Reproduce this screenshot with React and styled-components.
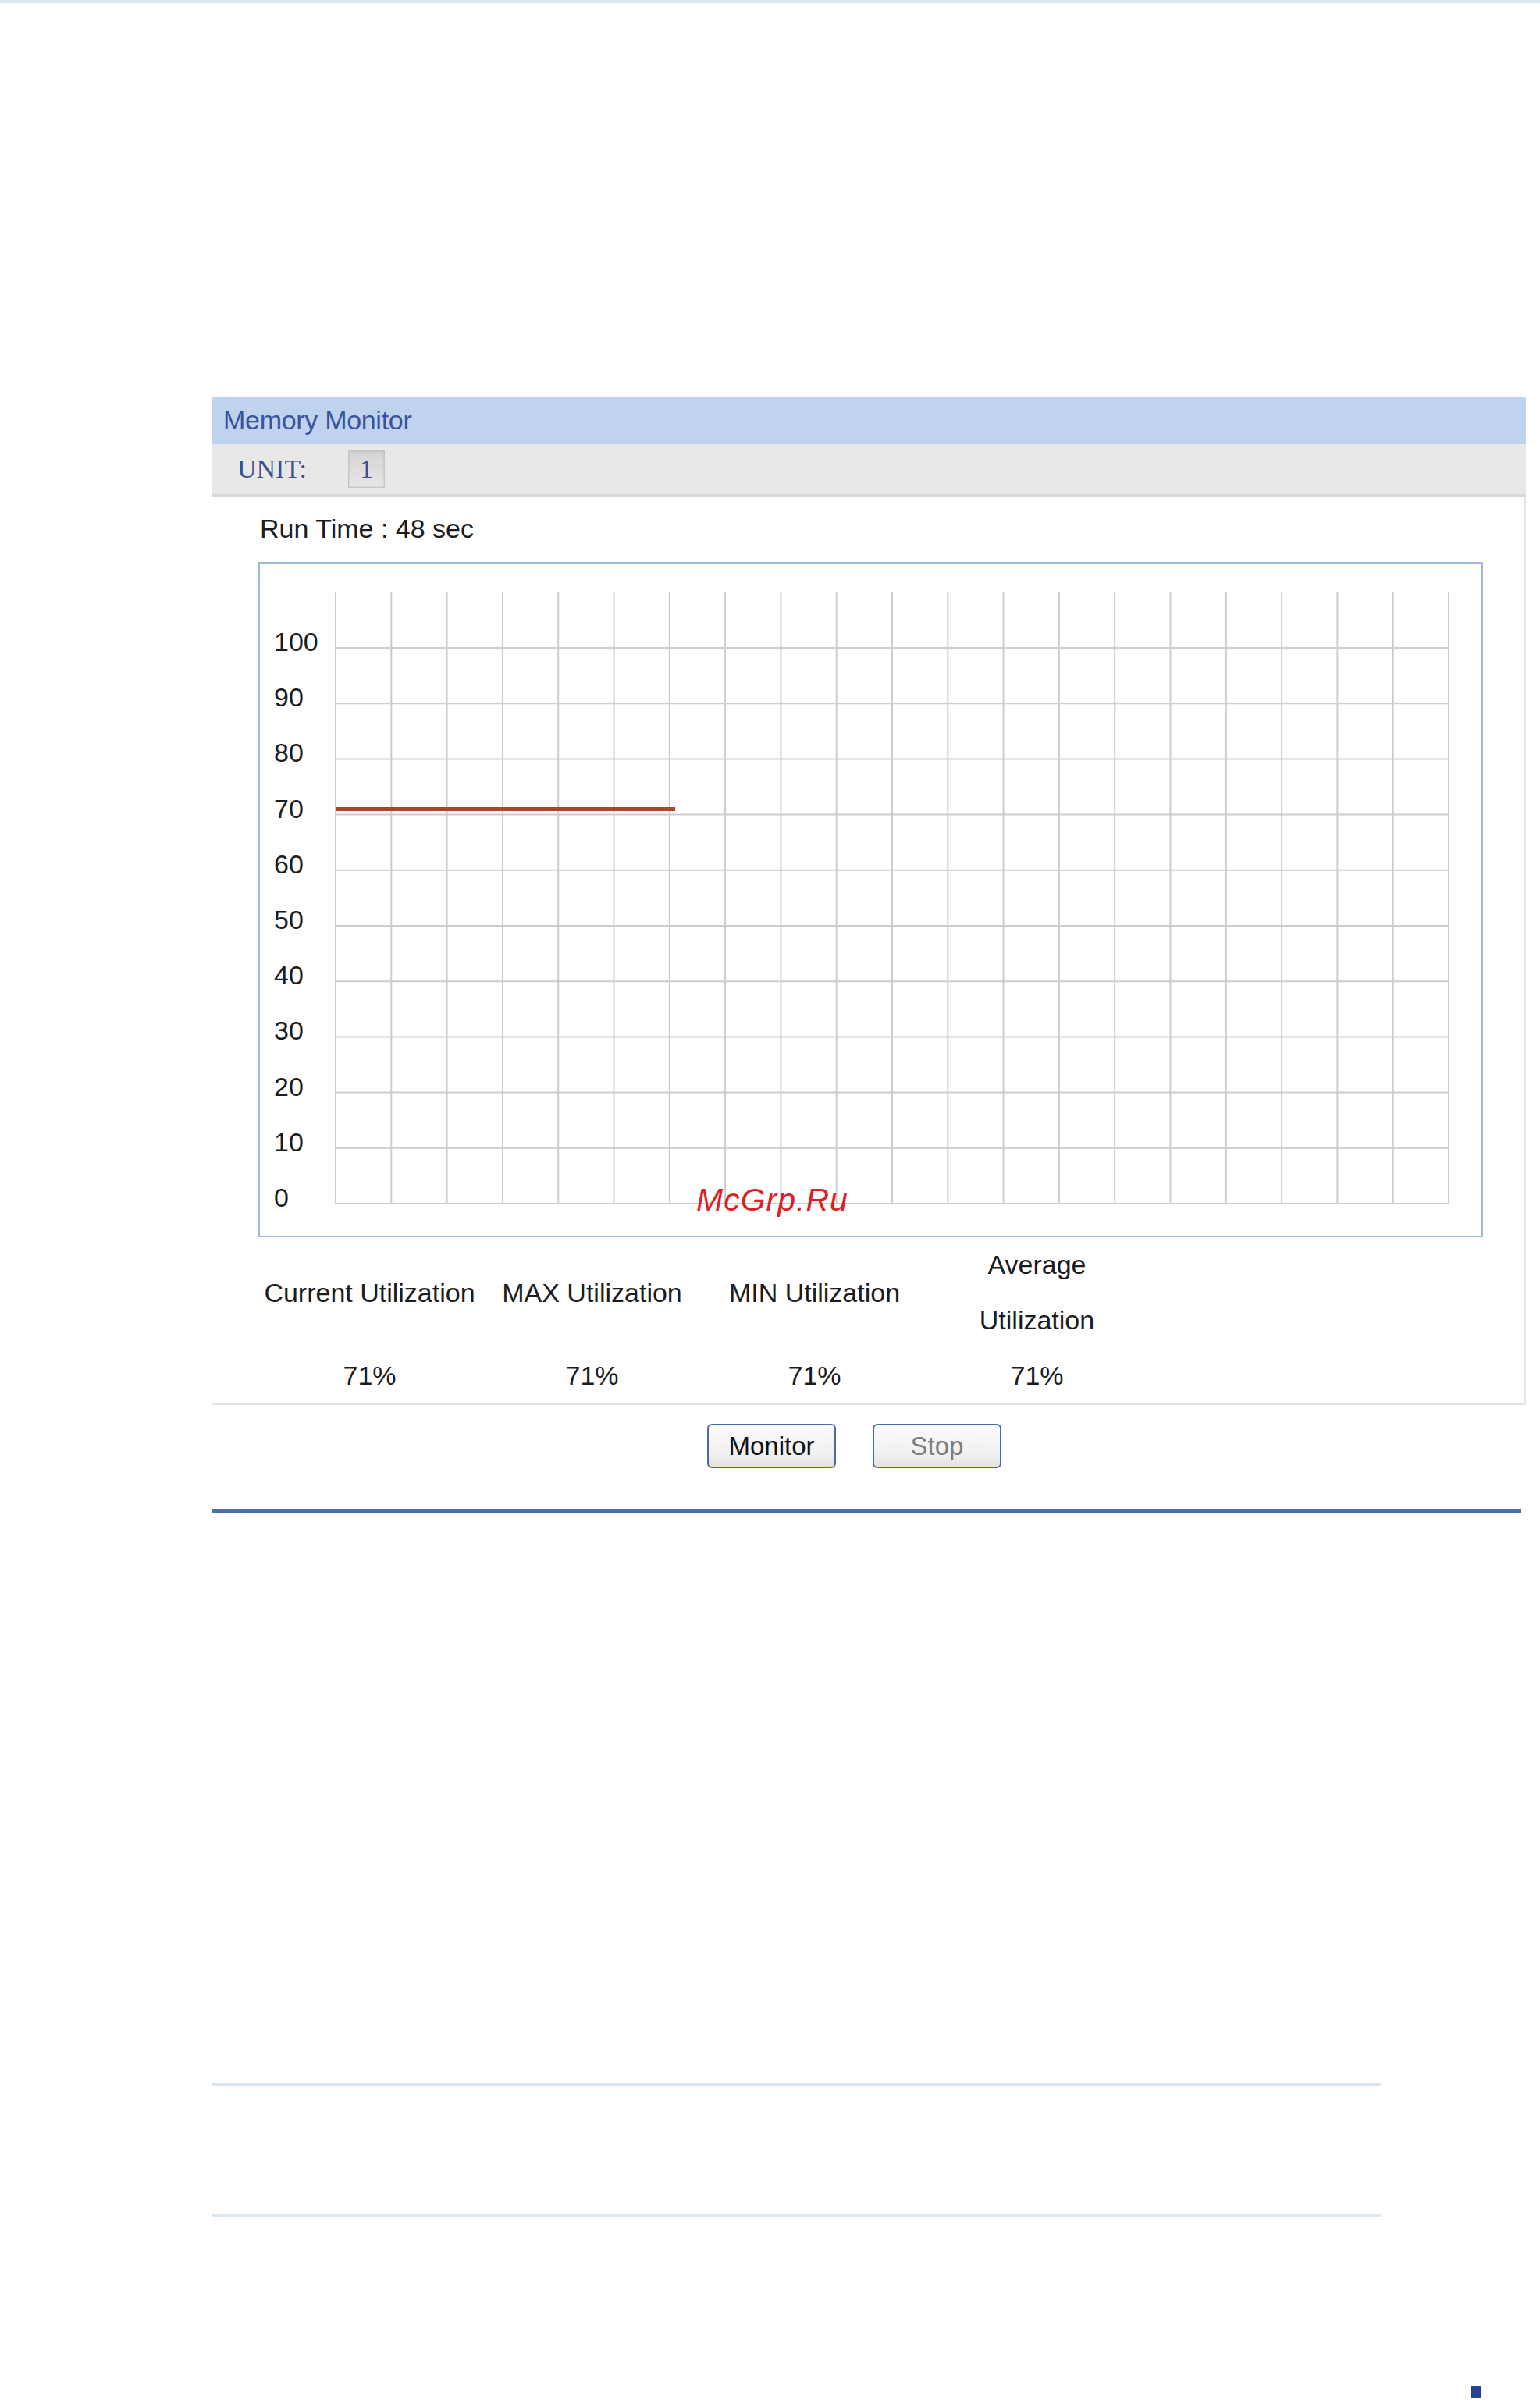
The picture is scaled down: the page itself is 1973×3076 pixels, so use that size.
import React from 'react'
import styled, { createGlobalStyle } from 'styled-components'

const GlobalStyle = createGlobalStyle`
  body {
    margin: 0;
    background: #fff;
    font-family: 'Liberation Sans', Arial, sans-serif;
    color: #1c1c1c;
  }
`

const Page = styled.div`
  width: 1973px;
  min-height: 3076px;
  overflow: hidden;
`

const TopStrip = styled.div`
  height: 4px;
  background: #dce6ec;
`

const Content = styled.div`
  padding: 504px 0 0 271px;
`

const Panel = styled.section`
  width: 1684px;
`

const Header = styled.div`
  height: 61px;
  line-height: 61px;
  padding-left: 15px;
  background: #bfd3ee;
  color: #3a539e;
  font-size: 34px;
  letter-spacing: -0.3px;
`

const UnitRow = styled.div`
  height: 64px;
  display: flex;
  align-items: center;
  gap: 53px;
  padding-left: 33px;
  background: #e8e8e7;
  border-bottom: 4px solid #d8d8d8;
  font-family: 'Liberation Serif', 'Times New Roman', serif;
  font-size: 34px;
  color: #3b5090;
`

const UnitBox = styled.span`
  width: 45px;
  height: 46px;
  display: flex;
  align-items: center;
  justify-content: center;
  background: linear-gradient(#d4d4d4, #e6e6e6);
  border: 1px solid #c4c4c4;
  box-shadow: inset 0 0 3px rgba(0, 0, 0, 0.15);
`

const Body = styled.div`
  padding: 20px 0 0 60px;
  border-right: 2px solid #e4e4e4;
  border-bottom: 3px solid #e4e4e4;
`

const RunTime = styled.div`
  height: 40px;
  line-height: 40px;
  padding-left: 2px;
  margin-bottom: 23px;
  font-size: 34px;
`

const ChartBox = styled.div`
  position: relative;
  width: 1565px;
  height: 861px;
  border: 2px solid #a2b8d7;
`

const Watermark = styled.span`
  position: absolute;
  left: 559px;
  top: 792px;
  font-size: 41px;
  font-style: italic;
  letter-spacing: 1px;
  color: #dd1f26;
`

const Stats = styled.div`
  display: grid;
  grid-template-columns: repeat(4, 285px);
  font-size: 34px;
  text-align: center;
`

const StatLabel = styled.div`
  height: 142px;
  display: flex;
  align-items: center;
  justify-content: center;
  line-height: 71px;
`

const StatValue = styled.div`
  height: 70px;
  line-height: 70px;
`

const ButtonRow = styled.div`
  display: flex;
  justify-content: center;
  gap: 47px;
  padding: 24px 37px 0 0;
`

const Button = styled.button`
  width: 165px;
  height: 57px;
  padding: 0;
  border: 2px solid #4b6ca2;
  border-radius: 6px;
  background: linear-gradient(#fbfbfb 0%, #f0f0f0 70%, #e2e2e2 100%);
  box-shadow: inset 0 -10px 0 -8px #f3e6b8;
  font-family: 'Liberation Sans', Arial, sans-serif;
  font-size: 33px;
  color: ${(p) => (p.$disabled ? '#7d7d7d' : '#111')};
`

const BlueRule = styled.div`
  width: 1678px;
  height: 5px;
  margin-top: 52px;
  background: #4a72a6;
`

const LightRule = styled.div`
  width: 1498px;
  height: 4px;
  margin-top: ${(p) => p.$gap}px;
  background: #dce6ec;
`

const Corner = styled.div`
  width: 14px;
  height: 15px;
  margin: 217px 0 0 1613px;
  background: #2a4399;
`

const CELL = 71.3
const GX = 97
const GTOP = 36.8
const G0 = 820
const COLS = 20

function Chart({ value, endX }) {
  const right = GX + COLS * CELL
  const vLines = Array.from({ length: COLS + 1 }, (_, i) => GX + i * CELL)
  const levels = Array.from({ length: 11 }, (_, i) => 100 - i * 10)
  const y = (v) => G0 - v * 7.12

  return (
    <svg width="1565" height="861" viewBox="0 0 1565 861">
      {vLines.map((x) => (
        <line key={x} x1={x} x2={x} y1={GTOP} y2={G0} stroke="#cdcdcd" strokeWidth="2" />
      ))}
      {levels.map((v) => (
        <g key={v}>
          <line x1={GX} x2={right} y1={y(v)} y2={y(v)} stroke="#cdcdcd" strokeWidth="2" />
          <text
            x="18"
            y={y(v) + 4}
            fontSize="34"
            fontFamily="'Liberation Sans', Arial, sans-serif"
            fill="#1c1c1c"
          >
            {v}
          </text>
        </g>
      ))}
      <line x1={GX} x2={endX} y1={y(value)} y2={y(value)} stroke="#b0432a" strokeWidth="5" />
    </svg>
  )
}

const stats = [
  { label: 'Current Utilization', value: '71%' },
  { label: 'MAX Utilization', value: '71%' },
  { label: 'MIN Utilization', value: '71%' },
  { label: ['Average', 'Utilization'], value: '71%' },
]

const App = () => {
  return (
    <Page>
      <GlobalStyle />
      <TopStrip />
      <Content>
        <Panel>
          <Header>Memory Monitor</Header>
          <UnitRow>
            <span>UNIT:</span>
            <UnitBox>1</UnitBox>
          </UnitRow>
          <Body>
            <RunTime>Run Time : 48 sec</RunTime>
            <ChartBox>
              <Chart value={71} endX={532} />
              <Watermark>McGrp.Ru</Watermark>
            </ChartBox>
            <Stats>
              {stats.map((s, i) => (
                <StatLabel key={i}>
                  {Array.isArray(s.label) ? (
                    <span>
                      {s.label[0]}
                      <br />
                      {s.label[1]}
                    </span>
                  ) : (
                    s.label
                  )}
                </StatLabel>
              ))}
              {stats.map((s, i) => (
                <StatValue key={i}>{s.value}</StatValue>
              ))}
            </Stats>
          </Body>
          <ButtonRow>
            <Button>Monitor</Button>
            <Button $disabled>Stop</Button>
          </ButtonRow>
        </Panel>
        <BlueRule />
        <LightRule $gap={731} />
        <LightRule $gap={163} />
        <Corner />
      </Content>
    </Page>
  )
}

export default App
